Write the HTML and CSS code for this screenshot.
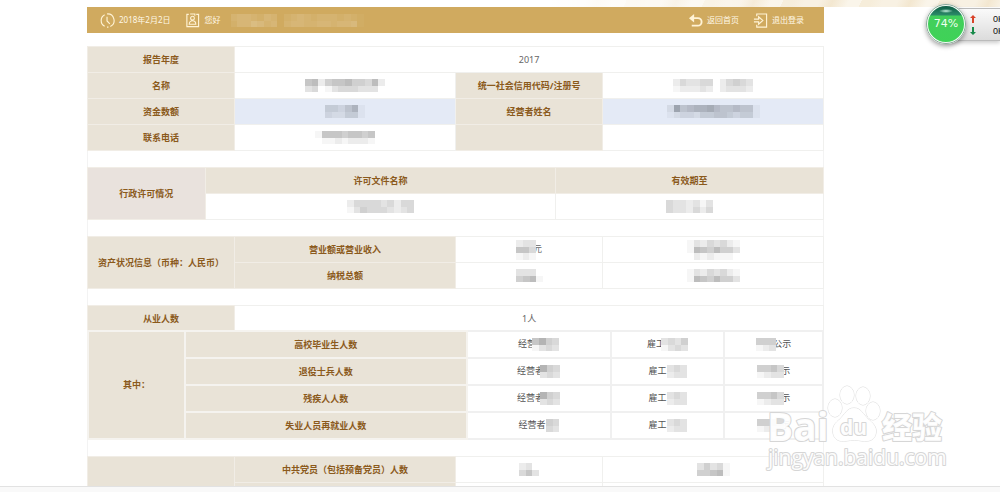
FILE: index.html
```html
<!DOCTYPE html>
<html lang="zh-CN">
<head>
<meta charset="utf-8">
<title>年度报告</title>
<link rel="stylesheet" href="styles.css">
</head>
<body>
<div class="banner"></div>
<main class="page">
  <header class="bar">
    <span class="item">
      <svg class="icon" viewBox="0 0 16 16"><path d="M5 14.2A7 7 0 0 1 5 1.8M7.500 1A7 7 0 0 1 11 14.300M7.500 15H9M7.500 4v4.500l3 3"/></svg>
      <span>2018年2月2日</span>
    </span>
    <span class="item user">
      <svg class="icon" viewBox="0 0 16 16"><path d="M4 1.500H2v13h12.500v-13H12M5.500 1h5v2M8 3.500a2 2 0 1 1 0 4a2 2 0 1 1 0-4M4.500 12c0-5 7-5 7 0zM4.500 12h7"/></svg>
      <span>您好</span><span class="mosaic light" data-m="034432430234323332321 024465340344334434451"></span>
    </span>
    <nav class="links">
      <a class="item" href="#home"><svg class="icon back" viewBox="0 0 16 16"><path class="solid" d="M1 5.500L6.500 1v9z"/><path d="M5 5.500h5.500a4 4 0 0 1 0 8H4"/></svg>返回首页</a>
      <a class="item" href="#logout"><svg class="icon" viewBox="0 0 16 16"><path d="M4 3.500V1h10.500v14H4v-2.500M1 6.500h5V4l4.500 4L6 12V9.500H1"/></svg>退出登录</a>
    </nav>
  </header>

  <div class="report">
    <table>
      <colgroup><col class="w20"><col class="w30"><col class="w20"><col class="w30"></colgroup>
      <tr><th scope="row">报告年度</th><td colspan="3">2017</td></tr>
      <tr><th scope="row">名称</th><td><span class="mosaic" data-m="672566755472 340134443330"></span></td><th scope="row">统一社会信用代码/注册号</th><td><span class="mosaic" data-m="243344024543 122232023332"></span></td></tr>
      <tr class="active"><th scope="row">资金数额</th><td><span class="mosaic" data-m="443571 322441"></span></td><th scope="row">经营者姓名</th><td><span class="mosaic" data-m="29567786556551 12332445543441"></span></td></tr>
      <tr><th scope="row">联系电话</th><td><span class="mosaic" data-m="166656656 011212221"></span></td><th></th><td></td></tr>
    </table>

    <table>
      <colgroup><col class="w16"><col><col class="permit-date"></colgroup>
      <tr><th scope="row" rowspan="2" class="rose">行政许可情况</th><th scope="col">许可文件名称</th><th scope="col">有效期至</th></tr>
      <tr><td><span class="mosaic" data-m="2444434244 1354443234"></span></td><td><span class="mosaic" data-m="4332313 4332424"></span></td></tr>
    </table>

    <table>
      <colgroup><col class="w20"><col class="w30"><col class="w20"><col class="w30"></colgroup>
      <tr><th scope="row" rowspan="2">资产状况信息（币种<span class="colon">：</span>人民币）</th><th scope="row">营业额或营业收入</th><td><span class="mosaic" data-m="233 664 121"></span><span class="tail">元</span></td><td><span class="mosaic" data-m="13243421 17657553 02121110"></span></td></tr>
      <tr><th scope="row">纳税总额</th><td><span class="mosaic" data-m="3330 5671"></span></td><td><span class="mosaic" data-m="13243421 17657553"></span></td></tr>
    </table>

    <div class="staff">
      <table>
        <colgroup><col class="w20"><col></colgroup>
        <tr><th scope="row">从业人数</th><td colspan="3">1人</td></tr>
      </table>
      <table class="detail">
        <colgroup><col class="of"><col class="kind"><col class="owner"><col class="hired"><col></colgroup>
        <tr><th scope="rowgroup" rowspan="4">其中<span class="colon">：</span></th><th scope="row">高校毕业生人数</th><td>经营<span class="mosaic cover" data-m="6854 1343"></span></td><td>雇工<span class="mosaic cover" data-m="3435 1343"></span></td><td><span class="mosaic" data-m="555 123"></span><span class="tail">公示</span></td></tr>
        <tr><th scope="row">退役士兵人数</th><td>经营者<span class="mosaic cover" data-m="854 343"></span></td><td>雇工<span class="mosaic" data-m="343 233"></span></td><td><span class="mosaic" data-m="5564 1233"></span><span class="tail">示</span></td></tr>
        <tr><th scope="row">残疾人人数</th><td>经营者<span class="mosaic cover" data-m="854 343"></span></td><td>雇工<span class="mosaic" data-m="343 233"></span></td><td><span class="mosaic" data-m="5564 1233"></span><span class="tail">示</span></td></tr>
        <tr><th scope="row">失业人员再就业人数</th><td>经营者<span class="mosaic" data-m="54 43"></span></td><td>雇工<span class="mosaic" data-m="343 233"></span></td><td><span class="mosaic" data-m="5564 1233"></span><span class="tail">示</span></td></tr>
      </table>
    </div>

    <table>
      <colgroup><col class="w20"><col class="w30"><col class="w20"><col class="w30"></colgroup>
      <tr><th rowspan="2"></th><th scope="row">中共党员（包括预备党员）人数</th><td><span class="mosaic" data-m="230 463"></span></td><td><span class="mosaic" data-m="35341 55671"></span></td></tr>
      <tr><th></th><td></td><td></td></tr>
    </table>
  </div>
</main>
<footer class="strip"></footer>

<aside class="monitor">
  <div class="speeds">
    <span><svg class="up" viewBox="0 0 6 8"><path d="M3 0l3 3H4v5H2V3H0z"/></svg>0K</span>
    <span><svg class="down" viewBox="0 0 6 8"><path d="M3 8l3-3H4V0H2v5H0z"/></svg>0K</span>
  </div>
  <div class="ball">74%</div>
</aside>

<svg class="watermark" viewBox="0 0 190 92" aria-label="Baidu 经验 jingyan.baidu.com">
  <g class="paw"><ellipse cx="71" cy="27" rx="7" ry="9"/><ellipse cx="83" cy="14" rx="7" ry="9"/><ellipse cx="99" cy="15" rx="7" ry="9"/><ellipse cx="109" cy="30" rx="7" ry="9"/>
  <path d="M90 27c-7 0-9 6-14 11c-5 4-8 8-7 14c1 7 7 9 13 8c6-1 11-1 16 0c7 1 13-1 14-8c1-6-3-10-8-14c-5-5-7-11-14-11z"/></g>
  <text class="logo" x="3" y="60">Bai</text>
  <text class="du" x="76" y="54">du</text>
  <text class="jy" x="118" y="57">经验</text>
  <text class="url" x="4" y="84">jingyan.baidu.com</text>
</svg>
<script src="mosaic.js"></script>
</body>
</html>
```

FILE: styles.css
```css
* { box-sizing: border-box; }

body {
  margin: 0;
  height: 100vh;
  display: flex;
  flex-direction: column;
  overflow: hidden;
  position: relative;
  background: #fff;
  color: #666;
  font: 9px/12px "Noto Sans", "Noto Sans CJK SC", sans-serif;
}

.banner {
  flex: none;
  height: 7px;
  background:
    linear-gradient(90deg, #fff 55%, #fff0 80%),
    repeating-linear-gradient(115deg, #f6edda 0 9px, #f8f1e3 20px 33px, #f3e7d0 45px, #faf5ea 60px 71px);
}

.page {
  flex: 1;
  min-height: 0;
  overflow: hidden;
  margin: 0 17.6% 0 8.7%;
}

.bar {
  display: flex;
  align-items: center;
  height: 26px;
  padding: 0 20px 0 13px;
  background: #d0aa5f;
  color: #fff8e6;
  font-size: 8px;
}

.item {
  display: flex;
  align-items: center;
  gap: 4px;
  color: inherit;
  text-decoration: none;
}

.user { margin-left: 15px; }

.links {
  display: flex;
  gap: 14px;
  margin-left: auto;
}

.icon {
  width: 15px;
  height: 15px;
  fill: none;
  stroke: #fff3d6;
  stroke-width: 1.2;
}

.back { stroke-width: 2; }
.solid { fill: #fff3d6; stroke: none; }

.report {
  display: grid;
  gap: 16px;
  margin-top: 13px;
  background:
    linear-gradient(#f3f3f3, #f3f3f3) left / 1px 100% no-repeat,
    linear-gradient(#f3f3f3, #f3f3f3) right / 1px 100% no-repeat;
}

table {
  width: 100%;
  table-layout: fixed;
  border-collapse: collapse;
}

th, td {
  height: 26px;
  padding: 0;
  border: 1px solid #f0f0ee;
  text-align: center;
  vertical-align: middle;
  white-space: nowrap;
}

th {
  background: #e9e3d7;
  border-color: #f1ede6;
  color: #8b5a1c;
  font-weight: 700;
}

.colon { font-family: "Noto Sans CJK TC", sans-serif; }

.rose { background: #e9e2dd; }
.active td { background: #e4eaf6; }

.w16 { width: 16%; }
.w20 { width: 20%; }
.w30 { width: 30%; }
.permit-date { width: 36.4%; }

.detail { margin-top: -2px; }
.detail th, .detail td { height: 27px; border-width: 2px; border-color: #f0f0f0; }
.detail th { border-color: #f5f3ef; }
.detail td { color: #555; }
.of { width: 13.2%; }
.kind { width: 38.3%; }
.owner { width: 19.6%; }
.hired { width: 15.5%; }

.mosaic {
  display: inline-block;
  vertical-align: middle;
  background: #fff;
  fill: #000;
}

.mosaic svg { display: block; }
.cover { position: relative; margin-left: -4px; }
.light { background: #d0aa5f; fill: #fff; }
.active .mosaic { background: none; fill: #101820; }
.tail { margin-left: -3px; }
.mosaic:has(+ .tail) { position: relative; }

.strip {
  flex: none;
  height: 6px;
  border-top: 1px solid #e2e2e2;
  background: #f9f9f9;
}

.monitor {
  position: absolute;
  top: 4px;
  right: 0;
  width: 74px;
  height: 40px;
}

.speeds {
  position: absolute;
  top: 4px;
  left: 20px;
  right: 0;
  height: 33px;
  padding: 4px 0 0 23px;
  overflow: hidden;
  border: 1px solid #bbb;
  border-right: 0;
  background: linear-gradient(#fafafa, #dcdcdc);
  box-shadow: 0 2px 4px #0003;
  color: #111;
  font: 9px/12px "Liberation Sans", sans-serif;
}

.speeds span {
  display: flex;
  align-items: center;
  gap: 17px;
  white-space: nowrap;
}

.speeds svg { flex: none; width: 6px; height: 8px; }
.up { fill: #d9432a; }
.down { fill: #178a4a; }

.ball {
  position: absolute;
  top: 0;
  left: 0;
  width: 40px;
  height: 40px;
  border: 2px solid #f4fff6;
  border-radius: 50%;
  outline: 1px solid #8aa79a;
  outline-offset: -1px;
  background:
    radial-gradient(ellipse 7px 2px at 50% 5px, #c9f2e0, #c9f2e000),
    linear-gradient(#0f5d45, #2b8a68 9px, #42cf5c 10px, #3fd257);
  box-shadow: 0 2px 5px #0006;
  color: #effff0;
  font: 11px/36px "DejaVu Sans", sans-serif;
  text-align: center;
}

.watermark {
  position: absolute;
  left: 764px;
  top: 381px;
  width: 190px;
  height: 92px;
  fill: #fffffff0;
  stroke: #d6d6d6;
  stroke-width: 2;
  stroke-linejoin: round;
  paint-order: stroke;
}

.paw { stroke: #dcdcdc; stroke-width: 1; }
.logo { font: 700 39px "Open Sans", sans-serif; }
.du { font: 700 21px "Open Sans", sans-serif; }
.jy { font: 900 30px "Noto Sans CJK SC", sans-serif; }
.url { font: 400 21px "Open Sans", sans-serif; }
```

FILE: mosaic.js
```js
// Draws a censored value as shaded cells: one digit per cell, rows separated by a space.
const CELL = 20 / 3;
document.querySelectorAll(".mosaic").forEach((el) => {
  const rows = el.dataset.m.split(" ");
  const cols = rows[0].length;
  const rects = rows.map((row, y) => [...row].map((level, x) =>
    `<rect x="${x}" y="${y}" width="1" height="1" opacity="${level * 0.037}"/>`).join("")).join("");
  const width = Math.round(cols * CELL);
  const height = Math.round(rows.length * CELL);
  el.innerHTML = `<svg width="${width}" height="${height}" viewBox="0 0 ${cols} ${rows.length}" preserveAspectRatio="none" shape-rendering="crispEdges">${rects}</svg>`;
});
```
